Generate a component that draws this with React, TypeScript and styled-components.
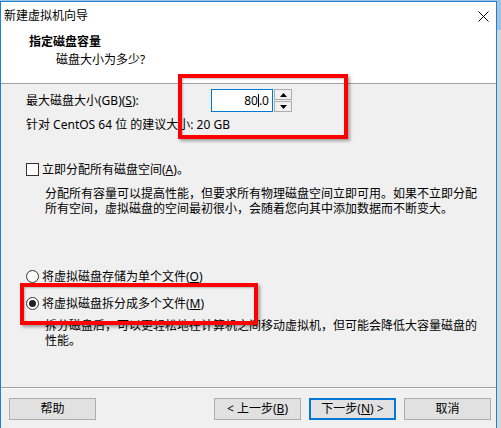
import React from "react";
import styled, { createGlobalStyle } from "styled-components";

const GlobalStyle = createGlobalStyle`
  html, body { margin: 0; padding: 0; }
  body {
    width: 501px;
    height: 428px;
    overflow: hidden;
    background: linear-gradient(to bottom, #9fc3e0 0, #9fc3e0 30px, #d4d6d8 30px);
    font-family: "Noto Sans", "Noto Sans CJK SC", "Liberation Sans", sans-serif;
    font-size: 12px;
    color: #000;
  }
`;

const Window = styled.div`
  position: relative;
  box-sizing: border-box;
  width: 497px;
  height: 427px;
  margin-top: 1px;
  border: 1px solid #1883d7;
  border-bottom: none;
  background: #f0f0f0;
  display: flex;
  flex-direction: column;
  overflow: hidden;
`;

const TitleBar = styled.div`
  height: 28px;
  background: #fff;
  display: flex;
  align-items: center;
  justify-content: space-between;
  padding: 0 7px 0 3px;
  line-height: 16px;
`;

const Header = styled.div`
  background: #fff;
  border-bottom: 1px solid #a0a0a0;
  padding: 4px 0 0 28px;
  box-sizing: content-box;
  height: 49px;
`;

const HeaderTitle = styled.div`
  font-weight: bold;
  line-height: 16px;
`;

const HeaderSub = styled.div`
  line-height: 16px;
  margin: 2px 0 0 27px;
`;

const Body = styled.div`
  flex: 1;
  padding: 5px 0 0 25px;
  display: flex;
  flex-direction: column;
`;

const SizeRow = styled.div`
  display: flex;
  align-items: center;
  height: 23px;
`;

const SizeLabel = styled.div`
  width: 185px;
  line-height: 16px;
`;

const NumberBox = styled.div`
  box-sizing: border-box;
  width: 62px;
  height: 23px;
  border: 1px solid #0078d7;
  background: #fff;
  display: flex;
  align-items: center;
  justify-content: flex-end;
  padding-right: 3px;
  line-height: 16px;
`;

const Caret = styled.span`
  display: inline-block;
  width: 1px;
  height: 13px;
  background: #000;
  vertical-align: middle;
`;

const Spin = styled.div`
  display: flex;
  flex-direction: column;
  margin-left: 1px;
  gap: 1px;
`;

const SpinButton = styled.div`
  box-sizing: border-box;
  width: 18px;
  height: 11px;
  border: 1px solid #adadad;
  background: #f0f0f0;
  display: flex;
  align-items: center;
  justify-content: center;
`;

const Line = styled.div<{ $mt?: number }>`
  line-height: 16px;
  margin-top: ${(p) => p.$mt ?? 0}px;
  white-space: nowrap;
`;

const OptionRow = styled.div<{ $mt: number }>`
  display: flex;
  align-items: center;
  height: 16px;
  margin-top: ${(p) => p.$mt}px;
  white-space: nowrap;
`;

const CheckBox = styled.span`
  box-sizing: border-box;
  width: 13px;
  height: 13px;
  border: 1px solid #333;
  background: #fff;
  margin-right: 3px;
  flex: none;
`;

const Radio = styled.span<{ $on?: boolean }>`
  box-sizing: border-box;
  width: 13px;
  height: 13px;
  border-radius: 50%;
  border: 1px solid #333;
  background: #fff;
  margin-right: 3px;
  flex: none;
  display: flex;
  align-items: center;
  justify-content: center;
  &::after {
    content: "";
    display: ${(p) => (p.$on ? "block" : "none")};
    width: 7px;
    height: 7px;
    border-radius: 50%;
    background: #222;
  }
`;

const Desc = styled.div<{ $mt: number }>`
  margin: ${(p) => p.$mt}px 0 0 19px;
  line-height: 15px;
  white-space: nowrap;
`;

const Footer = styled.div`
  border-top: 1px solid #a0a0a0;
  box-shadow: inset 0 1px 0 #fff;
  display: flex;
  align-items: flex-start;
  padding: 10px 5px 0 8px;
  box-sizing: content-box;
  height: 30px;
`;

const Spacer = styled.div`
  flex: 1;
`;

const ButtonGroup = styled.div`
  display: flex;
  gap: 8px;
`;

const Button = styled.div<{ $primary?: boolean }>`
  box-sizing: border-box;
  width: 87px;
  height: 22px;
  background: #e1e1e1;
  border: ${(p) => (p.$primary ? "2px solid #0078d7" : "1px solid #adadad")};
  display: flex;
  align-items: center;
  justify-content: center;
  line-height: 16px;
  white-space: nowrap;
`;

const Highlight = styled.div<{ $l: number; $t: number; $w: number; $h: number }>`
  position: absolute;
  left: ${(p) => p.$l}px;
  top: ${(p) => p.$t}px;
  width: ${(p) => p.$w}px;
  height: ${(p) => p.$h}px;
  box-sizing: border-box;
  border: 4px solid #ff0000;
  box-shadow: 2px 2px 3px rgba(0, 0, 0, 0.35), inset 1px 1px 2px rgba(0, 0, 0, 0.25);
  pointer-events: none;
`;

const CloseIcon = () => (
  <svg width="11" height="11" viewBox="0 0 11 11">
    <path d="M0.5 0.5 L10.5 10.5 M10.5 0.5 L0.5 10.5" stroke="#000" strokeWidth="1" fill="none" />
  </svg>
);

const Tri = ({ up }: { up?: boolean }) => (
  <svg width="7" height="4" viewBox="0 0 7 4">
    <path d={up ? "M3.5 0 L7 4 L0 4 Z" : "M0 0 L7 0 L3.5 4 Z"} fill="#000" />
  </svg>
);

export default function App() {
  return (
    <>
      <GlobalStyle />
      <Window>
        <TitleBar>
          <span>新建虚拟机向导</span>
          <CloseIcon />
        </TitleBar>
        <Header>
          <HeaderTitle>指定磁盘容量</HeaderTitle>
          <HeaderSub>磁盘大小为多少?</HeaderSub>
        </Header>
        <Body>
          <SizeRow>
            <SizeLabel>
              最大磁盘大小(GB)(<u>S</u>):
            </SizeLabel>
            <NumberBox>
              80<Caret />.0
            </NumberBox>
            <Spin>
              <SpinButton>
                <Tri up />
              </SpinButton>
              <SpinButton>
                <Tri />
              </SpinButton>
            </Spin>
          </SizeRow>
          <Line $mt={5}>针对 CentOS 64 位 的建议大小: 20 GB</Line>
          <OptionRow $mt={28}>
            <CheckBox />
            <span>
              立即分配所有磁盘空间(<u>A</u>)。
            </span>
          </OptionRow>
          <Desc $mt={9}>
            分配所有容量可以提高性能，但要求所有物理磁盘空间立即可用。如果不立即分配
            <br />
            所有空间，虚拟磁盘的空间最初很小，会随着您向其中添加数据而不断变大。
          </Desc>
          <OptionRow $mt={52}>
            <Radio />
            <span>
              将虚拟磁盘存储为单个文件(<u>O</u>)
            </span>
          </OptionRow>
          <OptionRow $mt={11}>
            <Radio $on />
            <span>
              将虚拟磁盘拆分成多个文件(<u>M</u>)
            </span>
          </OptionRow>
          <Desc $mt={7}>
            拆分磁盘后，可以更轻松地在计算机之间移动虚拟机，但可能会降低大容量磁盘的
            <br />
            性能。
          </Desc>
        </Body>
        <Footer>
          <Button>帮助</Button>
          <Spacer />
          <ButtonGroup>
            <Button>
              &lt; 上一步(<u>B</u>)
            </Button>
            <Button $primary>
              下一步(<u>N</u>) &gt;
            </Button>
            <Button>取消</Button>
          </ButtonGroup>
        </Footer>
        <Highlight $l={177} $t={72} $w={170} $h={65} />
        <Highlight $l={19} $t={281} $w={238} $h={42} />
      </Window>
    </>
  );
}
